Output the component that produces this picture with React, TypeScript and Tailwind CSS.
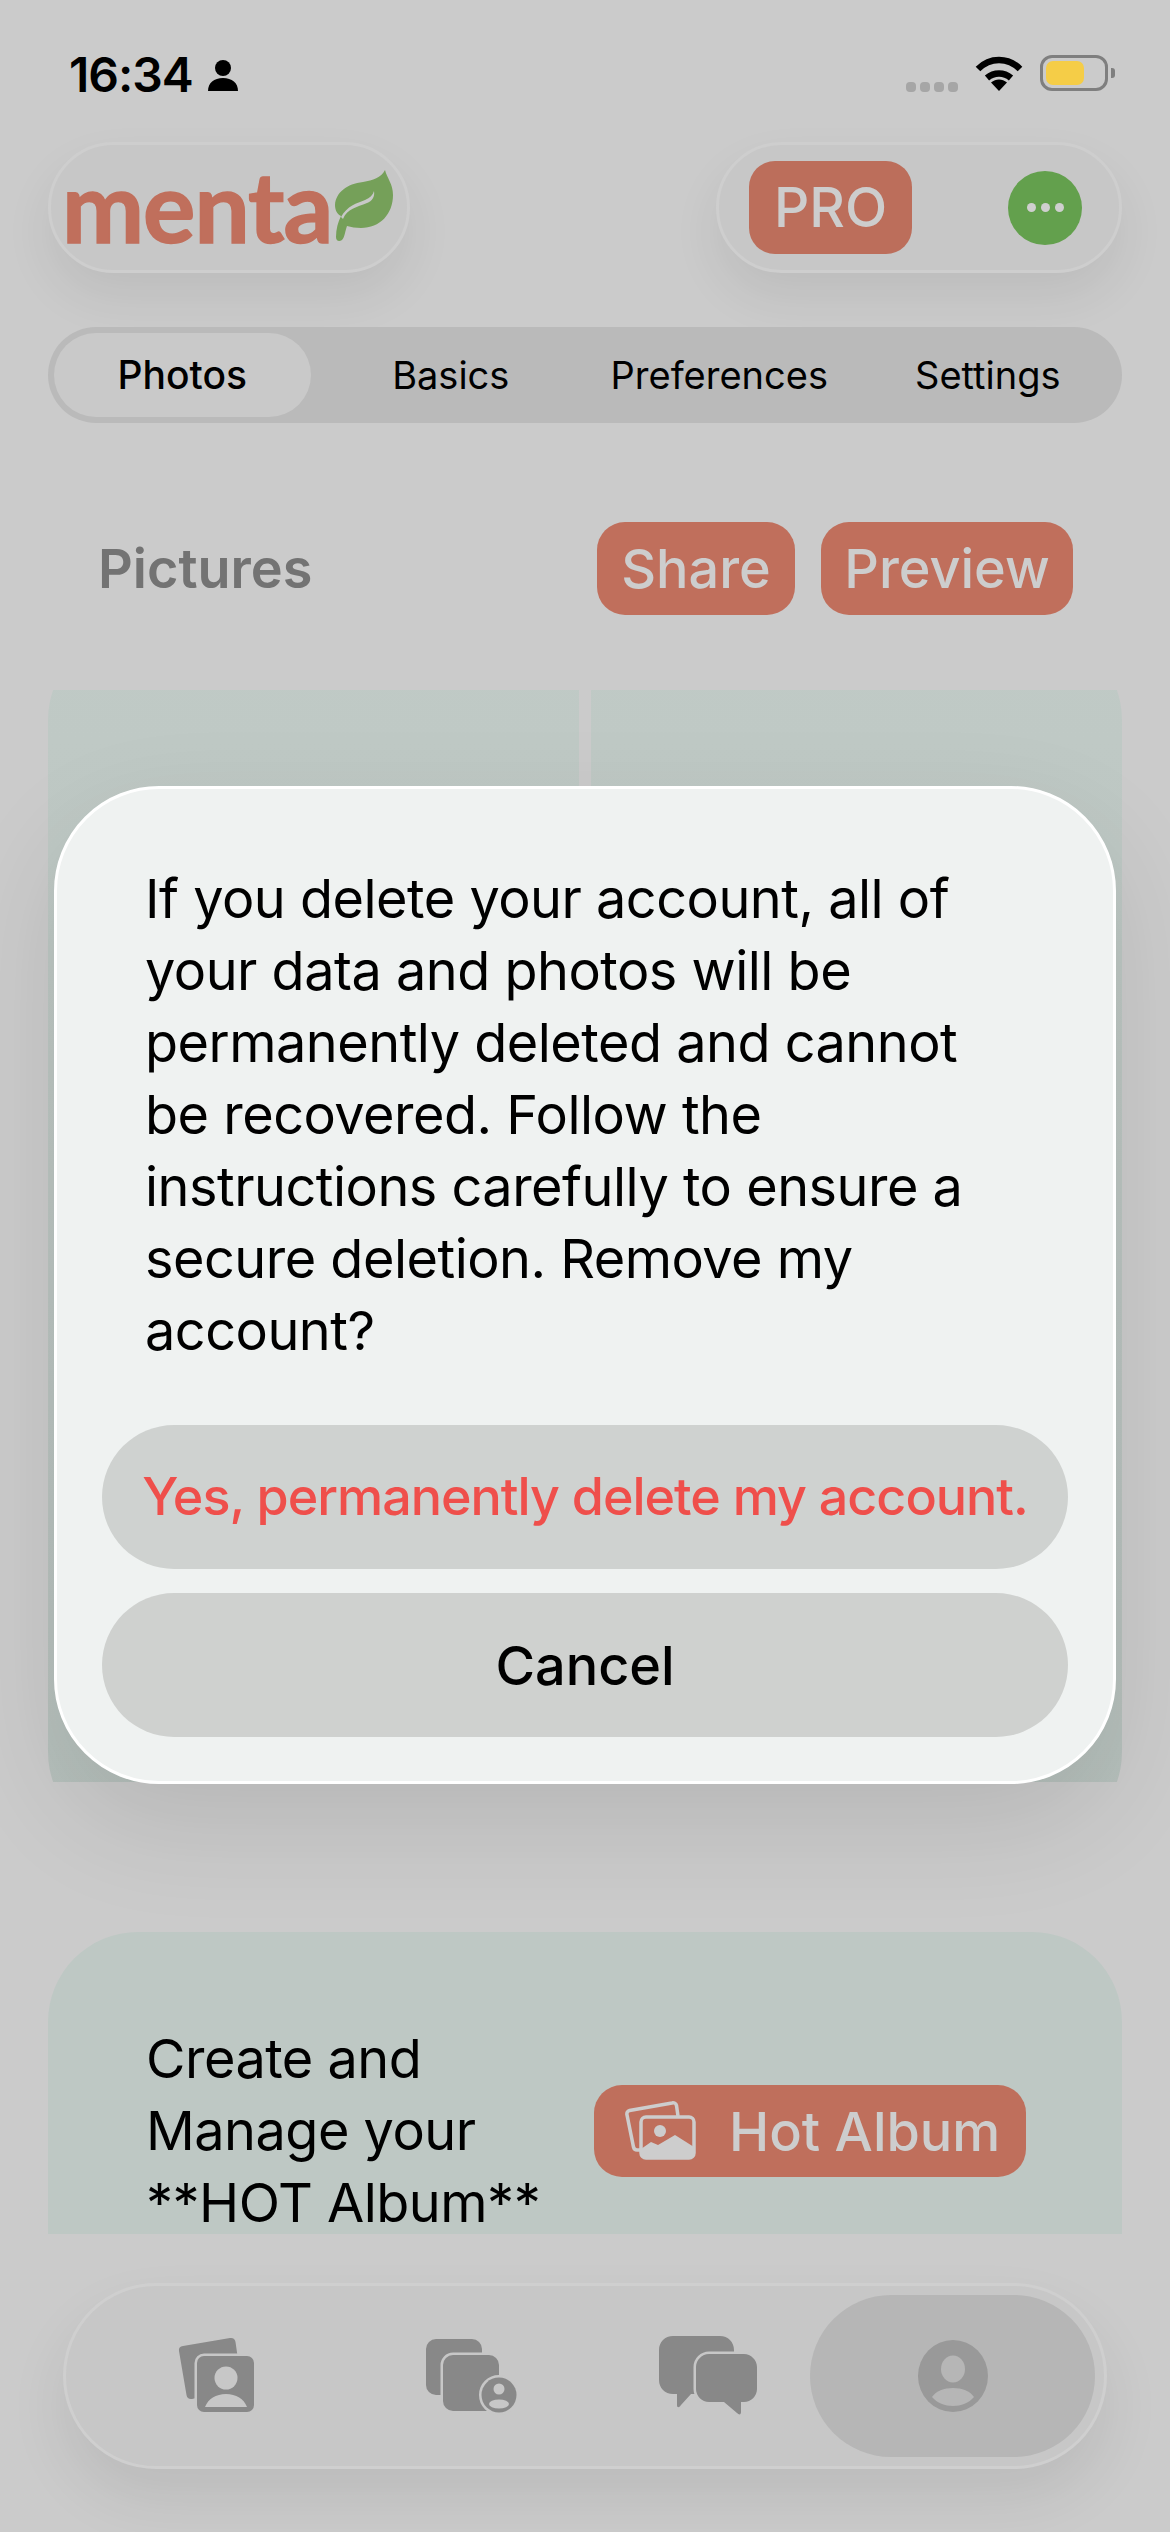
const INK = "#888888";

function PersonGlyph() {
  return (
    <svg width="32" height="32" viewBox="0 0 32 32" fill="#000">
      <circle cx="16" cy="9" r="8" />
      <path d="M1 32c0-8 6-13 15-13s15 5 15 13z" />
    </svg>
  );
}

function Wifi() {
  return (
    <svg width="48" height="36" viewBox="0 0 48 36" fill="none" stroke="#000" strokeWidth="6.5">
      <path d="M3 14C15 2 33 2 45 14" />
      <path d="M12 23c7-6 17-6 24 0" />
      <path d="M16 27.5c5-4 11-4 16 0L24 36z" fill="#000" stroke="none" />
    </svg>
  );
}

function Leaf() {
  return (
    <svg width="60" height="74" viewBox="0 0 60 74">
      <path
        d="M50 0C52 8 58 14 58 25 58 44 45 58 26 58 21 58 16 57 12 56 10 61 10 67 7 70 4 72 1 71 1 67 1 59 3 52 6 46 2 44 0 40 0 35 1 22 12 14 28 12 38 10 46 8 50 0Z"
        fill="#75a059"
      />
      <path d="M6 47C12 36 22 33 30 30 35 28 38 25 39 21 40 27 37 31 32 33 22 37 12 39 8 49Z" fill="#c8c8c8" />
    </svg>
  );
}

function AlbumPerson() {
  return (
    <svg width="78" height="78" viewBox="0 0 78 78">
      <path d="M5 9 52 1c3-.5 5 1 5.500 4L64 50 14 62c-3 .5-5-1-5.500-4L1 14c-.5-3 1-4.500 4-5Z" fill={INK} />
      <rect x="19" y="19" width="57" height="56" rx="7" fill={INK} stroke="#c7c7c7" strokeWidth="5" paintOrder="stroke" />
      <circle cx="48" cy="41" r="11.500" fill="#c7c7c7" />
      <path d="M27 70c3-8 11-13 21-13s18 5 21 13z" fill="#c7c7c7" />
    </svg>
  );
}

function AlbumBadge() {
  return (
    <svg width="92" height="76" viewBox="0 0 92 76">
      <rect x="0" y="0" width="56" height="56" rx="10" fill={INK} />
      <rect x="17" y="16" width="56" height="56" rx="10" fill={INK} stroke="#c7c7c7" strokeWidth="5" paintOrder="stroke" />
      <circle cx="73" cy="56" r="17.500" fill={INK} stroke="#c7c7c7" strokeWidth="5" paintOrder="stroke" />
      <circle cx="73" cy="50" r="5.500" fill="#c7c7c7" />
      <ellipse cx="73" cy="65" rx="10" ry="4.500" fill="#c7c7c7" />
    </svg>
  );
}

function Bubbles() {
  return (
    <svg width="100" height="80" viewBox="0 0 100 80">
      <path d="M14 0h47c8 0 14 6 14 14v30c0 8-6 14-14 14H32L22 69c-2 3-4 3-4 0V58h-4C6 58 0 52 0 44V14C0 6 6 0 14 0Z" fill={INK} />
      <path
        d="M50 18h35c7 0 13 6 13 13v22c0 7-6 13-13 13h-3v10c0 3-2 3-4 1L65 66H50c-7 0-13-6-13-13V31c0-7 6-13 13-13Z"
        fill={INK}
        stroke="#c7c7c7"
        strokeWidth="5"
        paintOrder="stroke"
      />
    </svg>
  );
}

function ProfileCircle() {
  return (
    <svg width="70" height="72" viewBox="0 0 70 72">
      <ellipse cx="35" cy="36" rx="35" ry="36" fill="#999999" />
      <ellipse cx="35" cy="29" rx="12" ry="13.500" fill="#b6b6b6" />
      <path d="M14 57c4-6 12-9 21-9s17 3 21 9c-5 6-13 9-21 9s-16-3-21-9Z" fill="#b6b6b6" />
    </svg>
  );
}

function HotAlbumIcon() {
  return (
    <svg width="74" height="60" viewBox="0 0 74 60" fill="none" stroke="#cdcdcd" strokeWidth="3.500">
      <path d="M17 49h-4c-2 0-3-1-3.500-3L3 14c-.5-2 .5-4 2.500-4.500L48 2c2-.5 4 .5 4.500 2.500L54 15" />
      <rect x="17" y="16" width="53" height="41" rx="5" fill="#bf6f5c" />
      <circle cx="36" cy="30" r="6" fill="#cdcdcd" stroke="none" />
      <path d="M17 48 27 41l7 3 17-10 19 12v7c0 3-2 5-5 5H22c-3 0-5-2-5-5z" fill="#cdcdcd" stroke="none" />
    </svg>
  );
}

const tabs = ["Photos", "Basics", "Preferences", "Settings"];

export default function App() {
  return (
    <div className="relative h-[2532px] w-[1170px] overflow-hidden bg-[#cbcbcb] font-['Inter',sans-serif] text-black">
      {/* status bar */}
      <div className="flex h-[142px] items-start justify-between pl-[69px] pr-[55px]">
        <div className="mt-[46px] flex items-center gap-[14px]">
          <span className="text-[48px] font-semibold leading-[58px] tracking-[-1px]">16:34</span>
          <PersonGlyph />
        </div>
        <div className="mt-[55px] flex items-start">
          <div className="mt-[27px] flex gap-[4px]">
            {[0, 1, 2, 3].map((i) => (
              <span key={i} className="h-[10px] w-[10px] rounded-[4px] bg-[#a6a6a6]" />
            ))}
          </div>
          <div className="ml-[17px]">
            <Wifi />
          </div>
          <div className="ml-[17px] flex items-center">
            <div className="h-[36px] w-[68px] rounded-[12px] border-[3px] border-[#7f7f7f] p-[3px]">
              <div className="h-full w-[38px] rounded-[7px] bg-[#f5cd47]" />
            </div>
            <div className="ml-[3px] h-[10px] w-[4px] rounded-r-[3px] bg-[#7f7f7f]" />
          </div>
        </div>
      </div>

      <div className="flex flex-col px-[48px]">
        {/* header */}
        <div className="flex h-[131px] justify-between">
          <div className="flex w-[362px] items-start rounded-[66px] border-[3px] border-[#cecece] bg-[#c7c7c7] pl-[11px] pt-[25px] shadow-[0_24px_50px_rgba(0,0,0,0.07)]">
            <span className="mt-[-14px] font-['Lato',sans-serif] text-[98px] font-bold leading-[98px] tracking-[-1px] text-[#c06f5c] [-webkit-text-stroke:1.500px_#c06f5c]">
              menta
            </span>
            <div className="ml-[3px]">
              <Leaf />
            </div>
          </div>
          <div className="flex w-[406px] items-center justify-between rounded-[66px] border-[3px] border-[#cecece] bg-[#c7c7c7] pl-[30px] pr-[37px] shadow-[0_24px_50px_rgba(0,0,0,0.07)]">
            <div className="flex h-[93px] w-[163px] items-center justify-center rounded-[26px] bg-[#bc6e5b] text-[55px] font-medium text-[#cdcdcd]">
              PRO
            </div>
            <div className="flex h-[74px] w-[74px] items-center justify-center gap-[5px] rounded-full bg-[#63a04d]">
              {[0, 1, 2].map((i) => (
                <span key={i} className="h-[9px] w-[9px] rounded-full bg-[#cfcfcf]" />
              ))}
            </div>
          </div>
        </div>

        {/* tabs */}
        <div className="mt-[54px] grid h-[96px] grid-cols-4 rounded-[48px] bg-[#bababa]">
          {tabs.map((t, i) => (
            <div
              key={t}
              className={
                i === 0
                  ? "m-[6px] flex items-center justify-center rounded-[42px] bg-[#c9c9c9] text-[39px] font-medium"
                  : "flex items-center justify-center text-[38px]"
              }
            >
              {t}
            </div>
          ))}
        </div>

        {/* section heading */}
        <div className="mt-[99px] flex h-[93px] items-center pl-[50px] pr-[49px]">
          <span className="text-[54px] font-semibold text-[#737373]">Pictures</span>
          <div className="ml-auto flex gap-[26px]">
            <div className="flex h-[93px] w-[198px] items-center justify-center rounded-[28px] bg-[#c06f5c] text-[54px] font-medium text-[#cdcdcd]">
              Share
            </div>
            <div className="flex h-[93px] w-[252px] items-center justify-center rounded-[28px] bg-[#c06f5c] text-[54px] font-medium text-[#cdcdcd]">
              Preview
            </div>
          </div>
        </div>

        {/* photo grid, cut off by the scroll area */}
        <div className="mt-[75px] h-[1092px] overflow-hidden">
          <div className="mt-[-60px] grid h-[1212px] grid-cols-2 gap-[12px] overflow-hidden rounded-[90px]">
            <div className="bg-gradient-to-b from-[#c0cac6] to-[#b5bfbb]" />
            <div className="bg-gradient-to-b from-[#c0cac6] to-[#b5bfbb]" />
          </div>
        </div>

        {/* hot album card */}
        <div className="mt-[150px] h-[302px] overflow-hidden rounded-t-[90px] bg-[#bec8c4]">
          <div className="flex pl-[98px]">
            <p className="mt-[91px] w-[448px] shrink-0 text-[54px] leading-[72px] tracking-[-0.5px]">Create and Manage your **HOT Album**</p>
            <div className="mt-[153px] flex h-[92px] w-[432px] items-center rounded-[28px] bg-[#bf6f5c] pl-[30px] text-[54px] font-medium text-[#cdcdcd]">
              <HotAlbumIcon />
              <span className="ml-[31px]">Hot Album</span>
            </div>
          </div>
        </div>

        {/* bottom nav */}
        <div className="mx-[15px] mt-[49px] flex h-[186px] items-center rounded-[93px] border-[3px] border-[#cfcfcf] bg-[#c7c7c7] shadow-[0_30px_60px_rgba(0,0,0,0.08)]">
          <div className="flex w-[210px] shrink-0 justify-end pr-[20px]">
            <AlbumPerson />
          </div>
          <div className="ml-[150px] shrink-0 pt-[2px]">
            <AlbumBadge />
          </div>
          <div className="ml-[141px] shrink-0">
            <Bubbles />
          </div>
          <div className="ml-[51px] flex h-[162px] w-[285px] shrink-0 items-center justify-center rounded-[81px] bg-[#b6b6b6]">
            <ProfileCircle />
          </div>
        </div>
      </div>

      {/* delete account dialog */}
      <div className="absolute left-[54px] top-[786px] flex h-[998px] w-[1062px] flex-col rounded-[105px] border-[3px] border-white bg-[#eff2f1] px-[45px] pt-[74px] shadow-[0_40px_110px_rgba(0,0,0,0.1)]">
        <p className="px-[43px] text-[54px] leading-[72px] tracking-[-0.5px]">
          If you delete your account, all of your data and photos will be permanently deleted and cannot be recovered. Follow the instructions carefully to ensure a secure deletion. Remove my account?
        </p>
        <div className="mt-[58px] flex h-[144px] items-center justify-center rounded-[72px] bg-[#cfd2d0] text-[52px] font-medium tracking-[-1px] text-[#ef4f4b]">
          Yes, permanently delete my account.
        </div>
        <div className="mt-[24px] flex h-[144px] items-center justify-center rounded-[72px] bg-[#cfd1cf] text-[54px] font-medium">
          Cancel
        </div>
      </div>
    </div>
  );
}
